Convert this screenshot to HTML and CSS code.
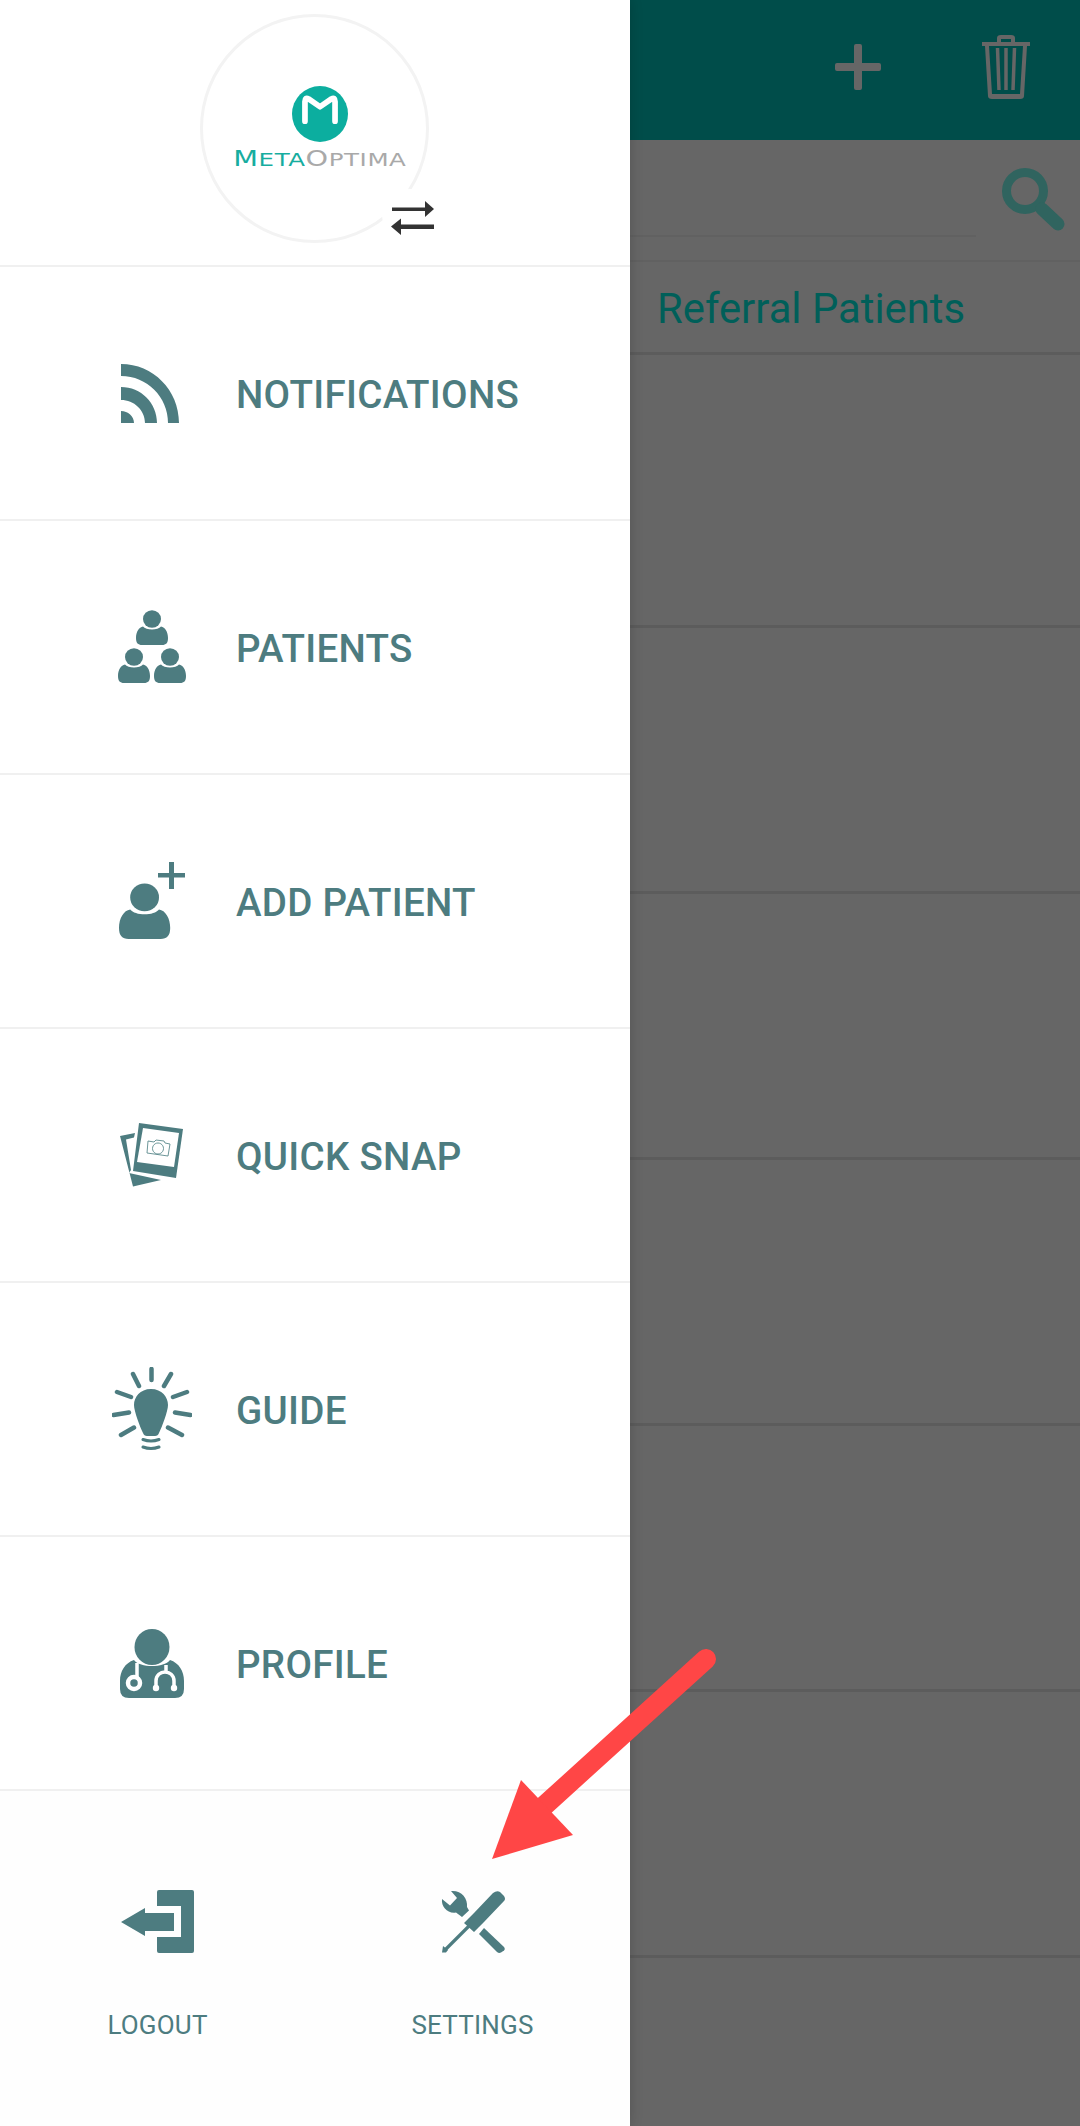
FILE: index.html
```html
<!DOCTYPE html>
<html lang="en">
<head>
<meta charset="utf-8">
<title>MetaOptima menu</title>
<link rel="stylesheet" href="styles.css">
</head>
<body>
<div class="page">
  <aside class="drawer">
    <header class="brand">
      <div class="logo-ring">
        <svg class="logo-mark" viewBox="0 0 54 54"><circle cx="27" cy="27" r="27" fill="#0cae9f"/><path d="M12.500 34V15Q12.500 10.500 16 12.500L27 20L38 12.500Q41.500 10.500 41.500 15V34" fill="none" stroke="#fff" stroke-width="5.500" stroke-linecap="round" stroke-linejoin="round"/></svg>
        <div class="logo-text"><span class="logo-meta"><span class="cap">M</span>ETA</span><span class="logo-optima"><span class="cap">O</span>PTIMA</span></div>
      </div>
      <div class="swap">
        <svg viewBox="0 0 44 36" width="44" height="36"><path d="M1 7.500H34V1L43 9L34 17V11H1Z" fill="#333"/><path d="M43 24.500H10V18.500L0 26.500L10 35V29H43Z" fill="#333"/></svg>
      </div>
    </header>
    <nav class="menu">
      <a class="item"><span class="ico"><svg width="62" height="59" viewBox="0 0 62 59"><path class="f" d="M0 0C32 0 58 26 58 59H47C47 33 26 12 0 12ZM0 23C20 23 36 39 36 59H24C24 46 13 36 0 36ZM0 47C7 47 13 52 13 59H0Z"/></svg></span><span class="label">NOTIFICATIONS</span></a>
      <a class="item"><span class="ico"><svg width="68" height="74" viewBox="0 0 68 74"><defs><g id="person"><ellipse cx="16" cy="9" rx="9" ry="8.700"/><path d="M7 16.500C10 20.500 22 20.500 25 16.500C29 17 32 22 32 28C32 33 30 35 26 35H6C2 35 0 33 0 28C0 22 3 17 7 16.500Z"/></g></defs><use class="f" href="#person" x="18" y="0"/><use class="f" href="#person" x="0" y="38"/><use class="f" href="#person" x="36" y="38"/></svg></span><span class="label">PATIENTS</span></a>
      <a class="item"><span class="ico"><svg width="66" height="78" viewBox="0 0 66 78"><defs><g id="person2"><ellipse cx="16" cy="9" rx="9" ry="8.700"/><path d="M7 16.500C10 20.500 22 20.500 25 16.500C29 17 32 22 32 28C32 33 30 35 26 35H6C2 35 0 33 0 28C0 22 3 17 7 16.500Z"/></g></defs><use class="f" href="#person2" transform="translate(0 21) scale(1.600)"/><path class="f" d="M50 0H55V11H66V15.500H55V27H50V15.500H39V11H50Z"/></svg></span><span class="label">ADD PATIENT</span></a>
      <a class="item"><span class="ico"><svg width="64" height="64" viewBox="0 0 64 64"><path class="f" d="M0 13L15 10L14 14.500L6 16.500L11 47L9 50L41 57L13 63.500Z"/><path class="f" d="M19 0L63 6L56 55L13 48Z"/><path d="M23 5L59 10L54 44L17 39Z" fill="#fff"/><path d="M28 18L34 19L36 17L44 18L45 20L50 21L48 33L27 30Z M38 20a5.500 5.500 0 1 0 .01 0Z" fill="none" stroke="#5b8a8d" stroke-width=".9"/></svg></span><span class="label">QUICK SNAP</span></a>
      <a class="item"><span class="ico"><svg width="80" height="84" viewBox="0 0 80 84"><path class="f" d="M39 22C50 22 56 30 56 38C56 44 50 60 47 66Q46 69 43 69H35Q32 69 31 66C28 60 22 44 22 38C22 30 28 22 39 22Z"/><path class="s" d="M39.500 2V13M21 7L27 19M59 7L52 19M5 25L19 30M75 25L61 30M1.500 48L17 45.500M78.500 48L63 45.500M9 68L22 60.500M70 68L56 60.500"/><path class="s thin" d="M31 72.500Q39 75.500 47 72.500M31 80Q39 83 47 80"/></svg></span><span class="label">GUIDE</span></a>
      <a class="item"><span class="ico"><svg width="64" height="69" viewBox="0 0 64 69"><ellipse class="f" cx="32" cy="18" rx="17.500" ry="18"/><path class="f" d="M14 31C20 39 44 39 50 31C59 34 64 42 64 52V60Q64 69 55 69H9Q0 69 0 60V52C0 42 5 34 14 31Z"/><path d="M17 34V49M46 36V42M36 58V52C36 40 54 40 54 52V58" fill="none" stroke="#fff" stroke-width="3.500"/><circle cx="14" cy="54" r="6" fill="#4d7c80" stroke="#fff" stroke-width="4.500"/><circle cx="36" cy="59" r="3.200" fill="#fff"/><circle cx="54" cy="59" r="3.200" fill="#fff"/></svg></span><span class="label">PROFILE</span></a>
    </nav>
    <footer class="foot">
      <a class="foot-item"><svg width="73" height="63" viewBox="0 0 73 63"><path class="f" d="M38 0H71Q73 0 73 2V61Q73 63 71 63H38Q36 63 36 61V47H60V16H36V2Q36 0 38 0Z"/><path class="f" d="M0 32L24 18V23H53V41H24V46Z"/></svg><span class="foot-label">LOGOUT</span></a>
      <a class="foot-item"><svg width="64" height="63" viewBox="0 0 64 63"><path class="f" d="M1 9L9 15.500L16 8L10 1C20 0 27 8 26 17L28 20.500L21 27L15 22.500C7 24 0 17 1 9Z"/><path class="f" d="M52 3Q56 0 59 2L63 6Q65 9 63 11L43 32L38 37L33 42L23 33L28 28L33 23Z"/><path d="M28 36L4 60" stroke="#4d7c80" stroke-width="3.200" fill="none"/><path class="f" d="M2 56L7 60L5 62.500L1 62.500Z"/><path class="f" d="M38 44L43 38L63 57Q64.500 59 63 60.500L60 62.500Q58 63.500 56 62Z"/></svg><span class="foot-label">SETTINGS</span></a>
    </footer>
  </aside>
  <main class="main">
    <div class="topbar">
      <svg width="46" height="46" viewBox="0 0 46 46"><path d="M19 2Q19 0 21 0H25Q27 0 27 2V19H44Q46 19 46 21V25Q46 27 44 27H27V44Q27 46 25 46H21Q19 46 19 44V27H2Q0 27 0 25V21Q0 19 2 19H19Z" fill="#666"/></svg>
      <svg width="50" height="66" viewBox="0 0 50 66"><path d="M16 8V4Q16 1 20 1H30Q34 1 34 4V8H49V12H46L43 62Q43 65 39 65H11Q7 65 7 62L4 12H1V8Z M20 5V8H30V5Z M8 12L11 60H39L42 12Z" fill="#666" fill-rule="evenodd"/><path d="M16.500 14L18 56M25 14V56M33.500 14L32 56" stroke="#666" stroke-width="3.500" fill="none"/></svg>
    </div>
    <div class="searchrow">
      <div class="search-line"></div>
      <svg class="search-ico" width="64" height="64" viewBox="0 0 64 64"><circle cx="23" cy="23" r="18.500" fill="none" stroke="#30645f" stroke-width="9"/><path d="M40 41L56 56" stroke="#30645f" stroke-width="13" stroke-linecap="round"/></svg>
    </div>
    <div class="tab">Referral Patients</div>
    <div class="row first"></div>
    <div class="row"></div>
    <div class="row"></div>
    <div class="row"></div>
    <div class="row"></div>
    <div class="row"></div>
  </main>
  <svg class="arrow" width="240" height="220" viewBox="0 0 240 220"><path d="M226 19L64 166" stroke="#ff4646" stroke-width="20" stroke-linecap="round" fill="none"/><path d="M12 219L41 140L93 195Z" fill="#ff4646"/></svg>
</div>
</body>
</html>
```
FILE: styles.css
```css
* { box-sizing: border-box; }
html, body { margin: 0; padding: 0; }
body { font-family: Roboto, "Liberation Sans", sans-serif; background: #666; }
.page { position: relative; width: 1080px; height: 2126px; display: flex; overflow: hidden; }
.drawer { width: 630px; height: 2126px; background: #fff; display: flex; flex-direction: column; position: relative; z-index: 2; box-shadow: 0 0 12px rgba(0, 0, 0, .18); }
.brand { height: 267px; border-bottom: 2px solid #f0f0f0; padding: 14px 0 0 200px; position: relative; }
.logo-ring { width: 229px; height: 229px; border: 3px solid #f3f3f3; border-radius: 50%; display: flex; flex-direction: column; align-items: center; padding: 69px 0 0 10px; }
.logo-mark { width: 56px; height: 56px; }
.logo-text { font-family: "DejaVu Sans", sans-serif; font-size: 17.500px; line-height: 22px; margin-top: 6px; letter-spacing: .4px; white-space: nowrap; font-weight: 400; transform: scaleX(1.4); }
.cap { font-size: 20.500px; }
.logo-meta { color: #17ad9f; }
.logo-optima { color: #a9a9a9; }
.swap { position: absolute; left: 382px; top: 189px; width: 56px; height: 52px; background: #fff; border-radius: 50%; display: flex; align-items: center; justify-content: center; padding: 6px 0 0 6px; }
.menu { display: flex; flex-direction: column; }
.item { height: 254px; border-bottom: 2px solid #f0f0f0; display: flex; align-items: center; padding-left: 102px; }
.ico { width: 100px; display: flex; justify-content: center; margin-right: 35px; }
.ico svg { display: block; }
.label { font-size: 38.500px; line-height: 46px; padding-top: 3px; font-weight: 500; letter-spacing: .3px; color: #4d7c80; white-space: nowrap; margin-left: -1px; }
.f { fill: #4d7c80; }
.s { fill: none; stroke: #4d7c80; stroke-width: 4.500; stroke-linecap: round; }
.s.thin { stroke-width: 3; }
.foot { flex: 1; display: flex; background: #fefefe; }
.foot-item { width: 315px; display: flex; flex-direction: column; align-items: center; padding-top: 99px; }
.foot-item svg { display: block; }
.foot-label { font-size: 26px; line-height: 28px; color: #4d7c80; margin-top: 58px; letter-spacing: .2px; }
.main { width: 450px; background: #666; }
.topbar { height: 140px; background: #004d4a; display: flex; align-items: flex-start; }
.topbar svg:first-child { margin: 44px 0 0 205px; }
.topbar svg:last-child { margin: 34px 0 0 100px; }
.searchrow { height: 122px; border-bottom: 2px solid #616161; position: relative; }
.search-line { position: absolute; left: 0; top: 95px; width: 346px; height: 2px; background: #616161; }
.search-ico { position: absolute; left: 372px; top: 28px; }
.tab { height: 93px; padding: 23px 0 0 27px; font-size: 41.800px; line-height: 48px; color: #005f59; border-bottom: 3px solid #5c5c5c; }
.row { height: 266px; border-bottom: 3px solid #5c5c5c; }
.row.first { height: 273px; }
.arrow { position: absolute; left: 480px; top: 1640px; z-index: 3; }
```
